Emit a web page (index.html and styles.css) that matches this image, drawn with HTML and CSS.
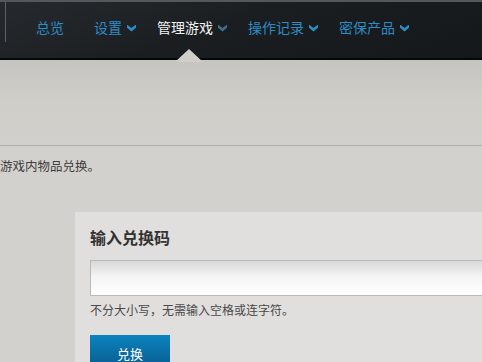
FILE: index.html
```html
<!DOCTYPE html>
<html>
<head>
    <meta charset="utf-8">
    <title>管理游戏</title>
    <link rel="stylesheet" href="styles.css">
</head>
<body>
    <div class="page">
        <div class="top-nav">
            <div class="nav-item first">总览</div>
            <div class="nav-item">设置<span class="chev"></span></div>
            <div class="nav-item active">管理游戏<span class="chev"></span><span class="notch"></span></div>
            <div class="nav-item">操作记录<span class="chev"></span></div>
            <div class="nav-item">密保产品<span class="chev"></span></div>
        </div>

        <div class="content">
            <div class="page-head"></div>
            <p class="intro">游戏内物品兑换。</p>

            <div class="redeem-card">
                <h2>输入兑换码</h2>
                <input type="text" class="code-input">
                <p class="hint">不分大小写，无需输入空格或连字符。</p>
                <button class="redeem-btn">兑换</button>
            </div>
        </div>
    </div>
</body>
</html>
```

FILE: styles.css
```css
body {
    font-family: "Noto Sans CJK SC", "Liberation Sans", sans-serif;
    margin: 0;
    padding: 0;
    width: 482px;
    height: 362px;
    overflow: hidden;
    background-color: #d2d0cc;
}

.page {
    display: flex;
    flex-direction: column;
    height: 362px;
    overflow: hidden;
}

.top-nav {
    height: 60px;
    flex-shrink: 0;
    display: flex;
    align-items: flex-start;
    gap: 21px;
    padding-left: 36px;
    box-sizing: border-box;
    padding-top: 17px;
    background: linear-gradient(160deg, #262a2e 0%, #1b1e21 45%, #15181b 100%);
    border-top: 2px solid #55585a;
    border-bottom: 2px solid #060708;
    position: relative;
}

.top-nav::before {
    content: "";
    position: absolute;
    left: 5px;
    top: 0;
    width: 1px;
    height: 40px;
    background-color: #5e6264;
}

.nav-item {
    position: relative;
    display: flex;
    align-items: center;
    font-size: 14px;
    line-height: 16px;
    color: #2c8cc6;
    cursor: pointer;
}

.nav-item.first {
    padding-right: 9px;
}

.nav-item.active {
    color: #f2f2f2;
}

/* small filled down arrow */
.chev {
    width: 9px;
    height: 7px;
    margin-left: 5px;
    margin-top: 2px;
    clip-path: polygon(0 0, 50% 50%, 100% 0, 100% 45%, 50% 100%, 0 45%);
    background: #2c8cc6;
}

.active .chev {
    background: #3a6f92;
}

.notch {
    position: absolute;
    left: 18px;
    top: 30px;
    width: 0;
    height: 0;
    border-left: 14px solid transparent;
    border-right: 14px solid transparent;
    border-bottom: 13px solid #d0ceca;
}

.content {
    background: linear-gradient(to bottom, #c6c4c0 0%, #d0cec9 40px, #d3d1cd 100px);
    flex: 1;
}

.page-head {
    height: 85px;
    border-bottom: 1px solid #b2b0ad;
}

.intro {
    margin: 11px 0 0;
    font-size: 12.5px;
    line-height: 17px;
    color: #3e3e3e;
}

.redeem-card {
    margin: 38px 0 0 75px;
    padding: 14px 0 0 15px;
    background-color: #e0dfdd;
    height: 200px;
    overflow: hidden;
}

.redeem-card h2 {
    margin: 0;
    font-size: 16px;
    line-height: 22px;
    font-weight: bold;
    color: #333;
}

.code-input {
    display: block;
    margin-top: 12px;
    width: calc(100% + 20px);
    height: 36px;
    box-sizing: border-box;
    border: 1px solid #b9b9b9;
    border-right: none;
    background: linear-gradient(to bottom, #d8d8d8 0%, #f4f4f4 45%, #ffffff 100%);
}

.hint {
    margin: 6px 0 0;
    font-size: 12px;
    line-height: 16px;
    color: #4a4a4a;
}

.redeem-btn {
    display: block;
    margin-top: 17px;
    width: 80px;
    height: 36px;
    border: none;
    background: linear-gradient(to bottom, #0b83bd 0%, #0a6ea5 50%, #09598a 100%);
    color: #ffffff;
    font-family: "Noto Sans CJK SC", sans-serif;
    font-size: 13px;
    cursor: pointer;
}
```
